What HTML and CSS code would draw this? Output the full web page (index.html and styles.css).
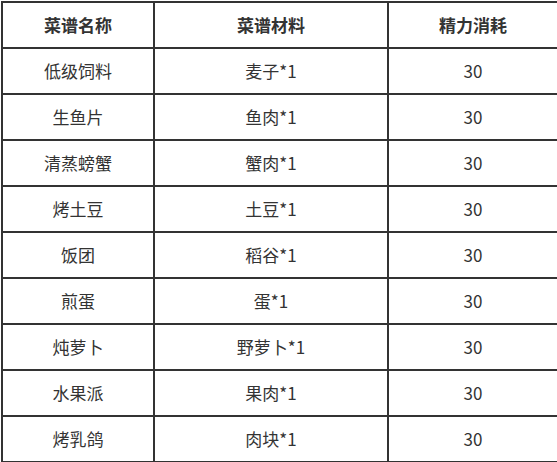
FILE: index.html
```html
<!DOCTYPE html>
<html lang="zh">
<head>
<meta charset="utf-8">
<link rel="stylesheet" href="styles.css">
</head>
<body>
<table class="recipes">
  <colgroup>
    <col class="c1"><col class="c2"><col class="c3">
  </colgroup>
  <thead>
    <tr><th>菜谱名称</th><th>菜谱材料</th><th>精力消耗</th></tr>
  </thead>
  <tbody>
    <tr><td>低级饲料</td><td>麦子*1</td><td>30</td></tr>
    <tr><td>生鱼片</td><td>鱼肉*1</td><td>30</td></tr>
    <tr><td>清蒸螃蟹</td><td>蟹肉*1</td><td>30</td></tr>
    <tr><td>烤土豆</td><td>土豆*1</td><td>30</td></tr>
    <tr><td>饭团</td><td>稻谷*1</td><td>30</td></tr>
    <tr><td>煎蛋</td><td>蛋*1</td><td>30</td></tr>
    <tr><td>炖萝卜</td><td>野萝卜*1</td><td>30</td></tr>
    <tr><td>水果派</td><td>果肉*1</td><td>30</td></tr>
    <tr><td>烤乳鸽</td><td>肉块*1</td><td>30</td></tr>
  </tbody>
</table>
</body>
</html>
```
FILE: styles.css
```css
html, body {
  margin: 0;
  padding: 0;
  background: #ffffff;
}
.recipes {
  border-collapse: collapse;
  width: 556px;
  margin: 1px 0 0 1px;
  table-layout: fixed;
  font-family: "Noto Sans CJK SC", "Noto Sans", sans-serif;
  font-size: 17px;
  color: #333333;
}
.c1 { width: 152px; }
.c2 { width: 234px; }
.c3 { width: 170px; }
.recipes th,
.recipes td {
  border: 2px solid #333333;
  height: 46px;
  padding: 0;
  text-align: center;
  vertical-align: middle;
  line-height: 20px;
  box-sizing: border-box;
}
.recipes th {
  font-weight: bold;
}
```
